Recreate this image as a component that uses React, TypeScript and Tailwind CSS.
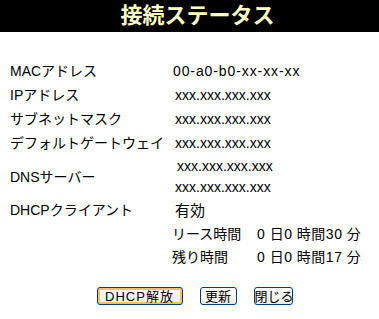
import React from "react";

const font = { fontFamily: '"Liberation Sans", "Noto Sans CJK JP", sans-serif' };

function Row({ label, children, h = "h-[24px]" }: { label: string; children: React.ReactNode; h?: string }) {
  return (
    <div className={`flex items-center ${h}`}>
      <div className="w-[163px] shrink-0 whitespace-nowrap">{label}</div>
      <div className="whitespace-nowrap">{children}</div>
    </div>
  );
}

const btn =
  "h-[18px] px-0 whitespace-nowrap rounded-[3px] border border-[#003c74] bg-gradient-to-b from-white to-[#ecebe6] text-[13px] leading-none text-black";

export default function App() {
  return (
    <div className="w-[379px] h-[319px] bg-white text-black text-[14px] leading-none" style={font}>
      <div className="h-[32px] bg-black flex items-center justify-center pl-[16px]">
        <span className="text-[22px] font-bold text-[#ffffc8]">接続ステータス</span>
      </div>
      <div className="pl-[10px] pt-[27px]">
        <Row label="MACアドレス"><span className="tracking-[0.9px]">00-a0-b0-xx-xx-xx</span></Row>
        <Row label="IPアドレス"><span className="pl-[2px]">xxx.xxx.xxx.xxx</span></Row>
        <Row label="サブネットマスク"><span className="pl-[2px]">xxx.xxx.xxx.xxx</span></Row>
        <Row label="デフォルトゲートウェイ"><span className="pl-[2px]">xxx.xxx.xxx.xxx</span></Row>
        <div className="flex items-center h-[43px]">
          <div className="w-[163px] shrink-0">DNSサーバー</div>
          <div className="flex flex-col">
            <div className="h-[21px] flex items-center pl-[4px]">xxx.xxx.xxx.xxx</div>
            <div className="h-[21px] flex items-center pl-[2px]">xxx.xxx.xxx.xxx</div>
          </div>
        </div>
        <Row label="DHCPクライアント"><span className="text-[15px] pl-[2px]">有効</span></Row>
        <div className="flex items-center h-[23px] pl-[162px] whitespace-nowrap">
          <span className="w-[85px]">リース時間</span>
          <span className="tracking-[0.5px]">0 日0 時間30 分</span>
        </div>
        <div className="flex items-center h-[23px] pl-[162px] whitespace-nowrap">
          <span className="w-[85px]">残り時間</span>
          <span className="tracking-[0.5px]">0 日0 時間17 分</span>
        </div>
      </div>
      <div className="flex justify-center gap-[17px] mt-[19px] pl-[10px]">
        <button className={`${btn} w-[86px] shadow-[inset_0_0_0_2px_#f7c35a] tracking-[1px]`}>DHCP解放</button>
        <button className={`${btn} w-[37px]`}>更新</button>
        <button className={`${btn} w-[39px]`}>閉じる</button>
      </div>
    </div>
  );
}
